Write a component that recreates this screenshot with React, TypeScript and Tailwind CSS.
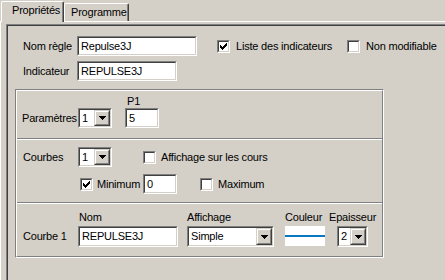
import type { ReactNode } from 'react';

// classic win2000 dialog bits
function Sunken({ className = '', children }: { className?: string; children?: ReactNode }) {
  return (
    <div className={`border border-t-[#808080] border-l-[#808080] border-r-white border-b-white ${className}`}>
      <div className="flex h-full w-full items-center overflow-hidden border border-t-[#404040] border-l-[#404040] border-r-[#d4d0c8] border-b-[#d4d0c8] bg-white">
        {children}
      </div>
    </div>
  );
}

function Edit({ value, className }: { value: string; className: string }) {
  return (
    <Sunken className={className}>
      <span className="pl-[2px] whitespace-nowrap">{value}</span>
    </Sunken>
  );
}

function Arrow() {
  return (
    <svg width="7" height="4" viewBox="0 0 7 4" shapeRendering="crispEdges">
      <rect x="0" y="0" width="7" height="1" fill="#000" />
      <rect x="1" y="1" width="5" height="1" fill="#000" />
      <rect x="2" y="2" width="3" height="1" fill="#000" />
      <rect x="3" y="3" width="1" height="1" fill="#000" />
    </svg>
  );
}

function Combo({ value, className }: { value: string; className: string }) {
  return (
    <Sunken className={className}>
      <span className="min-w-0 flex-1 overflow-hidden pl-[2px] whitespace-nowrap">{value}</span>
      <div className="h-full w-[16px] shrink-0 border border-t-[#d4d0c8] border-l-[#d4d0c8] border-r-[#404040] border-b-[#404040] bg-[#d4d0c8]">
        <div className="flex h-full w-full items-center justify-center border border-t-white border-l-white border-r-[#808080] border-b-[#808080]">
          <Arrow />
        </div>
      </div>
    </Sunken>
  );
}

function Check({ checked = false }: { checked?: boolean }) {
  return (
    <Sunken className="h-[13px] w-[13px] shrink-0">
      {checked && (
        <svg width="7" height="7" viewBox="0 0 7 7" shapeRendering="crispEdges" className="ml-[1px]">
          <rect x="6" y="0" width="1" height="1" />
          <rect x="5" y="1" width="2" height="1" />
          <rect x="0" y="2" width="1" height="1" />
          <rect x="4" y="2" width="3" height="1" />
          <rect x="0" y="3" width="2" height="1" />
          <rect x="3" y="3" width="3" height="1" />
          <rect x="0" y="4" width="5" height="1" />
          <rect x="1" y="5" width="3" height="1" />
          <rect x="2" y="6" width="1" height="1" />
        </svg>
      )}
    </Sunken>
  );
}

function Separator() {
  return <div className="h-[2px] border-t border-b border-t-[#808080] border-b-white" />;
}

export default function App() {
  return (
    <div className="h-[280px] w-[445px] overflow-hidden bg-[#d4d0c8] font-['Liberation_Sans',Arial,sans-serif] text-[11px] leading-[13px] tracking-[-0.2px] text-black">
      {/* Tabs */}
      <div className="flex h-[21px] items-end">
        <div className="relative z-10 -mb-px ml-px h-[21px] w-[63px] rounded-t-[2px] border-t border-l border-r border-t-white border-l-white border-r-[#404040] bg-[#d4d0c8] pt-[2px] pl-[10px] shadow-[inset_-1px_0_0_#808080]">
          Propriétés
        </div>
        <div className="h-[18px] w-[65px] rounded-t-[2px] border-t border-l border-r border-t-white border-l-white border-r-[#404040] pt-[2px] pl-[6px] shadow-[inset_-1px_0_0_#808080]">
          Programme
        </div>
      </div>

      {/* Tab sheet */}
      <div className="h-[300px] w-[470px] border-t border-l border-t-white border-l-white">
        <div className="mt-[2px] ml-[5px] h-[270px] w-[460px] border-t border-l border-t-[#808080] border-l-[#808080]">
          <div className="h-full w-full border-t border-l border-t-[#404040] border-l-[#404040]">
            {/* Nom / Indicateur */}
            <div className="mt-[10px] flex h-[20px] items-center pl-[15px]">
              <span className="w-[54px]">Nom règle</span>
              <Edit value="Repulse3J" className="h-[20px] w-[120px]" />
              <div className="ml-[20px] flex w-[130px] items-center">
                <Check checked />
                <span className="ml-[6px]">Liste des indicateurs</span>
              </div>
              <div className="flex items-center">
                <Check />
                <span className="ml-[6px]">Non modifiable</span>
              </div>
            </div>
            <div className="mt-[5px] flex h-[20px] items-center pl-[15px]">
              <span className="w-[54px]">Indicateur</span>
              <Edit value="REPULSE3J" className="h-[20px] w-[100px]" />
            </div>

            {/* Grouped box */}
            <div className="mt-[8px] ml-[7px] h-[169px] w-[369px] border border-t-[#808080] border-l-[#808080] border-r-white border-b-white">
              <div className="flex h-full w-full flex-col border border-t-white border-l-white border-r-[#808080] border-b-[#808080]">
                {/* Paramètres */}
                <div className="flex h-[47px] items-end pb-[10px] pl-[5px]">
                  <div className="flex h-[20px] items-center">
                    <span className="w-[56px]">Paramètres</span>
                    <Combo value="1" className="h-[20px] w-[34px]" />
                  </div>
                  <div className="ml-[13px] flex flex-col">
                    <span className="h-[13px] pl-[2px]">P1</span>
                    <Edit value="5" className="h-[20px] w-[34px]" />
                  </div>
                </div>
                <Separator />

                {/* Courbes */}
                <div className="h-[62px] pt-[7px]">
                  <div className="flex h-[20px] items-center pl-[6px]">
                    <span className="w-[55px]">Courbes</span>
                    <Combo value="1" className="h-[20px] w-[34px]" />
                    <div className="ml-[31px]">
                      <Check />
                    </div>
                    <span className="ml-[5px]">Affichage sur les cours</span>
                  </div>
                  <div className="mt-[7px] flex h-[20px] items-center pl-[63px]">
                    <Check checked />
                    <span className="ml-[4px] w-[46px]">Minimum</span>
                    <Edit value="0" className="h-[20px] w-[34px]" />
                    <div className="ml-[23px]">
                      <Check />
                    </div>
                    <span className="ml-[5px]">Maximum</span>
                  </div>
                </div>
                <Separator />

                {/* Courbe 1 */}
                <div className="flex flex-1 items-end pb-[9px] pl-[6px]">
                  <div className="flex h-[21px] w-[55px] items-center">Courbe 1</div>
                  <div className="flex flex-col">
                    <span className="mb-[2px] pl-[1px]">Nom</span>
                    <Edit value="REPULSE3J" className="h-[21px] w-[100px]" />
                  </div>
                  <div className="ml-[9px] flex flex-col">
                    <span className="mb-[2px]">Affichage</span>
                    <Combo value="Simple" className="h-[21px] w-[87px]" />
                  </div>
                  <div className="ml-[11px] flex flex-col pb-[1px]">
                    <span className="mb-[2px]">Couleur</span>
                    <div className="flex h-[20px] w-[40px] items-center bg-white">
                      <div className="h-[2px] w-full bg-[#0a78c0]" />
                    </div>
                  </div>
                  <div className="ml-[4px] flex flex-col">
                    <span className="mb-[2px]">Epaisseur</span>
                    <Combo value="2" className="ml-[8px] h-[21px] w-[31px]" />
                  </div>
                </div>
              </div>
            </div>
          </div>
        </div>
      </div>
    </div>
  );
}
